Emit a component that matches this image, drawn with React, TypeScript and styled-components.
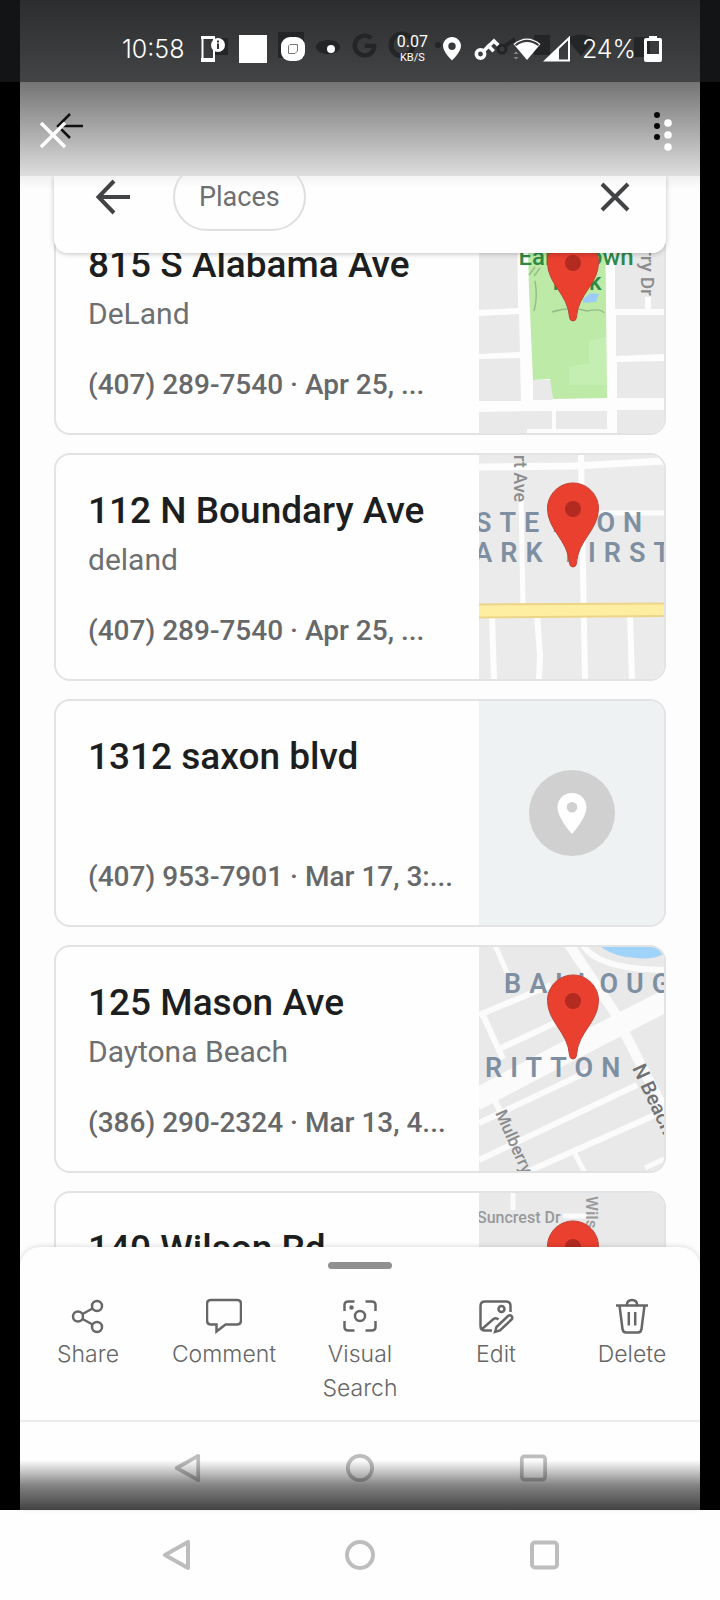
import React from "react";
import styled, { createGlobalStyle } from "styled-components";
import { FaGoogle } from "react-icons/fa";

interface Place {
  name: string;
  city?: string;
  detail: string;
  map: React.ReactNode;
}

const Pin = () => (
  <>
    <path
      d="M94 28C108 28 119.500 39.500 119.500 53.500C119.500 75 99 85 97.500 108Q97.200 112 94 112Q90.800 112 90.500 108C89 85 68.500 75 68.500 53.500C68.500 39.500 80 28 94 28Z"
      fill="#ea4030"
      stroke="#bd4338"
      strokeWidth="1"
    />
    <circle cx="94" cy="54" r="8" fill="#b22a20" />
  </>
);

const EarlBrownMap = () => (
  <MapDrawing viewBox="0 0 185 224" preserveAspectRatio="xMidYMid slice">
    <rect width="185" height="224" fill="#fdfdfd" />
    <g fill="#e9e9ea">
      <path d="M0 0H38L39 99L0 101ZM0 107L40 105L41 143L0 145ZM0 150L41 149L42 192H0ZM0 203L73 202V220H48V224H0Z" />
      <path d="M136 0H185V100H172V88H166V100H136ZM137 106H185V145L137 147ZM138 153L185 152V189H138ZM138 201H185V224H138Z" />
      <path d="M54 171H72L74 191H54ZM77 202H128V220H77Z" />
    </g>
    <path d="M48 0H126L128 189L74 190L71 170L54 171L50 80Z" fill="#bdeaa7" />
    <path d="M110 132L127 128V176H90V158L110 154Z" fill="#c5eeb3" />
    <path d="M104 90L112 84L120 85L117 93L104 94Z" fill="#9dcbf7" />
    <path d="M50 66L56 58M55 67L61 59M56 72Q59 88 55 102M73 103Q92 97 108 102Q122 99 125 104" fill="none" stroke="#96bd88" strokeWidth="1.500" />
    <MapText x="97" y="56" fontSize="24" textAnchor="middle" fill="#2d8a46">Earl Brown</MapText>
    <MapText x="98" y="81" fontSize="24" textAnchor="middle" fill="#2d8a46">Park</MapText>
    <MapText x="0" y="0" fontSize="19" transform="translate(162 40) rotate(90)" fill="#8b8c8e">rry Dr</MapText>
    <Pin />
  </MapDrawing>
);

const StetsonMap = () => (
  <MapDrawing viewBox="0 0 185 224" preserveAspectRatio="xMidYMid slice">
    <rect width="185" height="224" fill="#ebebeb" />
    <g stroke="#fdfdfd" fill="none">
      <path d="M0 12L95 11L185 6" strokeWidth="7" />
      <path d="M102 0L106 224" strokeWidth="6" />
      <path d="M42 40L44 152" strokeWidth="5" />
      <path d="M104 58H185" strokeWidth="5" />
      <path d="M13 160L15 224M58 160L61 200L60 224M151 160L153 224" strokeWidth="6" />
    </g>
    <path d="M0 149L185 148V161L0 163Z" fill="#fdeea2" />
    <path d="M0 149.500L185 148.500M0 162.500L185 161" stroke="#ecd589" strokeWidth="2" />
    <AreaText x="-4" y="77">STETSON</AreaText>
    <AreaText x="-28" y="107">PARK FIRST</AreaText>
    <MapText x="0" y="0" fontSize="18" transform="translate(35 0) rotate(90)" fill="#8b8c8e">rt Ave</MapText>
    <Pin />
  </MapDrawing>
);

const NoMap = () => (
  <MapDrawing viewBox="0 0 185 224" preserveAspectRatio="xMidYMid slice">
    <rect width="185" height="224" fill="#eef2f2" />
    <circle cx="93" cy="112" r="43" fill="#d0d0d0" />
    <path
      fillRule="evenodd"
      d="M93 92C101 92 107.500 98 107.500 106.500C107.500 117 93 133 93 133C93 133 78.500 117 78.500 106.500C78.500 98 85 92 93 92ZM93 101A5.300 5.300 0 1 0 93 111.600A5.300 5.300 0 1 0 93 101Z"
      fill="#ffffff"
    />
  </MapDrawing>
);

const BallougMap = () => (
  <MapDrawing viewBox="0 0 185 224" preserveAspectRatio="xMidYMid slice">
    <rect width="185" height="224" fill="#e9e9ea" />
    <path d="M122 0Q138 11 158 11Q172 13 185 7V0Z" fill="#9fd3fa" />
    <g stroke="#fbfbfb" fill="none">
      <path d="M104 -2Q118 22 185 23" strokeWidth="6" />
      <path d="M16 -2L29 28M96 207L106 226M166 221L185 212" strokeWidth="5" />
      <path d="M0 68L72 38M4 68L24 112M18 103L80 74" strokeWidth="6" />
      <path d="M89 -4L134 63L161 116L192 176" strokeWidth="10" />
      <path d="M-4 153L74 112L190 52" strokeWidth="22" />
      <path d="M0 176L110 124M0 213L158 138M50 224L176 168" strokeWidth="6" />
      <path d="M10 142L22 166" strokeWidth="6" />
    </g>
    <AreaText x="25" y="46">BALLOUG</AreaText>
    <AreaText x="6" y="130">RITTON</AreaText>
    <MapText x="0" y="0" fontSize="20" transform="translate(153 121) rotate(65)" fill="#717274">N Beach</MapText>
    <MapText x="0" y="0" fontSize="17" transform="translate(16 166) rotate(66)" fill="#8b8c8e">Mulberry</MapText>
    <Pin />
  </MapDrawing>
);

const SuncrestMap = () => (
  <MapDrawing viewBox="0 0 185 224" preserveAspectRatio="xMidYMid slice">
    <rect width="185" height="224" fill="#e9e9ea" />
    <path d="M34 0V17M84 23H108" stroke="#fbfbfb" strokeWidth="5" />
    <MapText x="-2" y="30" fontSize="16" fill="#98999b">Suncrest Dr</MapText>
    <MapText x="0" y="0" fontSize="17" transform="translate(107 3) rotate(90)" fill="#98999b">Wils</MapText>
    <Pin />
  </MapDrawing>
);

const places: Place[] = [
  { name: "815 S Alabama Ave", city: "DeLand", detail: "(407) 289-7540 · Apr 25, ...", map: <EarlBrownMap /> },
  { name: "112 N Boundary Ave", city: "deland", detail: "(407) 289-7540 · Apr 25, ...", map: <StetsonMap /> },
  { name: "1312 saxon blvd", detail: "(407) 953-7901 · Mar 17, 3:...", map: <NoMap /> },
  { name: "125 Mason Ave", city: "Daytona Beach", detail: "(386) 290-2324 · Mar 13, 4...", map: <BallougMap /> },
  { name: "140 Wilson Rd", detail: "", map: <SuncrestMap /> },
];

const actions = [
  {
    label: "Share",
    icon: (
      <>
        <circle cx="27" cy="8" r="5" />
        <circle cx="8" cy="18.500" r="5" />
        <circle cx="27" cy="29" r="5" />
        <path d="M12.500 16L22.500 10.500M12.500 21L22.500 26.500" />
      </>
    ),
  },
  {
    label: "Comment",
    icon: <path d="M5 2H31Q35 2 35 6V22Q35 26.500 31 26.500H19.500L10.500 33.500V26.500H5Q1 26.500 1 22V6Q1 2 5 2Z" />,
  },
  {
    label: "Visual Search",
    icon: (
      <>
        <path d="M2.500 13V7Q2.500 3.500 6.500 3.500H12.500M23.500 3.500H29.500Q33.500 3.500 33.500 7V13M33.500 23V29Q33.500 32.500 29.500 32.500H23.500M12.500 32.500H6.500Q2.500 32.500 2.500 29V23" />
        <circle cx="18" cy="18" r="5" />
        <circle cx="9.500" cy="9.500" r="1" fill="#676767" />
      </>
    ),
  },
  {
    label: "Edit",
    icon: (
      <>
        <path d="M14 32.500H7Q2.500 32.500 2.500 28V8Q2.500 3.500 7 3.500H28Q32.500 3.500 32.500 8V14" />
        <circle cx="23.500" cy="11" r="3" />
        <path d="M4 31L15.500 21Q18 19.200 20.500 21.500" />
        <path d="M17 34L18.500 29L30 18Q32 16.500 33.500 18Q35 20 33.500 21.500L22 32.500Z" />
      </>
    ),
  },
  {
    label: "Delete",
    icon: (
      <>
        <path d="M2 7.500H34M5.500 7.500L8.500 31Q9 34.500 12 34.500H24Q27 34.500 27.500 31L30.500 7.500M13 7Q13 2 18 2Q23 2 23 7M14.800 14V27.500M21.200 14V27.500" />
      </>
    ),
  },
];

const NavIcons = () => (
  <>
    <NavButton aria-label="Back">
      <svg viewBox="0 0 30 30"><path d="M4 15L27 2V28Z" /></svg>
    </NavButton>
    <NavButton aria-label="Home">
      <svg viewBox="0 0 30 30"><circle cx="15" cy="15" r="13" /></svg>
    </NavButton>
    <NavButton aria-label="Recent apps">
      <svg viewBox="0 0 30 30"><rect x="3" y="2.500" width="25" height="25" rx="3" /></svg>
    </NavButton>
  </>
);

const App: React.FC = () => {
  return (
    <Screen>
      <GlobalStyle />
      <StatusBar>
        <OldStatus viewBox="0 0 680 82" preserveAspectRatio="xMidYMid meet">
          <path d="M194 38H208V55H194ZM258 32H284V58H258ZM514 35H530V55H514Z" />
          <ellipse cx="308" cy="47" rx="12" ry="7" />
          <circle cx="382" cy="45" r="11" fill="none" stroke="#242527" strokeWidth="5" />
          <circle cx="418" cy="45" r="3" />
          <circle cx="482" cy="49" r="4" fill="none" stroke="#242527" strokeWidth="3" />
          <path d="M485 46L495 39" stroke="#242527" strokeWidth="4" />
          <path d="M547 39Q561 30 575 39L561 56ZM614 37H630V57H614Z" />
          <FaGoogle x="332" y="33" size={25} />
        </OldStatus>
        <StatusGroup $gap={14}>
          <Clock>10:58</Clock>
          <svg width="25" height="28" viewBox="0 0 25 28" fill="none">
            <path d="M2.500 2H14V26H2.500Z" stroke="#fff" strokeWidth="2" />
            <path d="M1 1H15V4H1ZM1 23H15V27H1Z" fill="#fff" />
            <circle cx="18" cy="10" r="7" fill="#fff" />
            <path d="M18 8.500V14M18 5.500V7.500" stroke="#333" strokeWidth="2" />
          </svg>
          <WhiteSquare />
          <svg width="24" height="24" viewBox="0 0 24 24">
            <rect width="24" height="24" rx="9" fill="#fff" />
            <path d="M9 7.500H16.500V14L14 16.500H7.500V9Z" fill="none" stroke="#777" />
          </svg>
          <Dot />
        </StatusGroup>
        <StatusGroup $gap={12}>
          <Speed>
            <b>0.07</b>
            <span>KB/S</span>
          </Speed>
          <svg width="20" height="25" viewBox="0 0 20 25">
            <path fillRule="evenodd" d="M10 1C15 1 19 5 19 10C19 16 10 24.500 10 24.500C10 24.500 1 16 1 10C1 5 5 1 10 1ZM10 6.500A3.700 3.700 0 1 0 10 13.900A3.700 3.700 0 1 0 10 6.500Z" fill="#fff" />
          </svg>
          <svg width="26" height="26" viewBox="0 0 26 26" fill="none" stroke="#fff" strokeWidth="3.500">
            <circle cx="6.500" cy="18" r="4.200" />
            <path d="M9.500 15L20 5L23 8M14.500 10L18.500 14" strokeLinecap="square" />
          </svg>
          <svg width="58" height="26" viewBox="0 0 58 26">
            <path d="M1.500 8Q15 -3 28.500 8L15 24Z" fill="#fff" />
            <path d="M3.500 9.200Q15 0.500 26.500 9.200" fill="none" stroke="#39393b" strokeWidth="2" />
            <path d="M57 2V24.500H33.500Z" fill="none" stroke="#fff" strokeWidth="2" />
            <path d="M47 11.500V25H33Z" fill="#fff" />
            <path d="M1.500 18L4 15.500L6.500 18ZM1.500 21L4 23.500L6.500 21Z" fill="#888" />
          </svg>
          <Battery>
            <Clock>24%</Clock>
            <svg width="18" height="26" viewBox="0 0 18 26">
              <path fillRule="evenodd" d="M5 0H13V2H16Q18 2 18 4V24Q18 26 16 26H2Q0 26 0 24V4Q0 2 2 2H5ZM3 5V18H15V5Z" fill="#fff" />
            </svg>
          </Battery>
        </StatusGroup>
      </StatusBar>

      <Viewer>
        <AppBar>
          <AppBarRow $dim>
            <IconButton aria-label="Back">
              <svg width="28" height="26" viewBox="0 0 28 26" fill="none" stroke="#111" strokeWidth="2.500">
                <path d="M27 13H2M14 1L2 13L14 25" />
              </svg>
            </IconButton>
            <IconButton aria-label="More">
              <svg width="8" height="28" viewBox="0 0 8 28" fill="#080808">
                <circle cx="4" cy="3" r="3" />
                <circle cx="4" cy="14" r="3" />
                <circle cx="4" cy="25" r="3" />
              </svg>
            </IconButton>
          </AppBarRow>
          <AppBarRow>
            <IconButton aria-label="Close">
              <svg width="26" height="26" viewBox="0 0 26 26" stroke="#fff" strokeWidth="3.500">
                <path d="M1 1L25 25M25 1L1 25" />
              </svg>
            </IconButton>
            <IconButton aria-label="More options">
              <svg width="8" height="32" viewBox="0 0 8 32" fill="#fff">
                <circle cx="4" cy="4" r="3.800" />
                <circle cx="4" cy="16" r="3.800" />
                <circle cx="4" cy="28" r="3.800" />
              </svg>
            </IconButton>
          </AppBarRow>
        </AppBar>

        <Results>
          <SearchBar>
            <IconButton aria-label="Back to search">
              <svg width="36" height="36" viewBox="0 0 36 36" fill="none" stroke="#414345" strokeWidth="4">
                <path d="M35 18H4M19 2L3.500 18L19 34" />
              </svg>
            </IconButton>
            <Chip>Places</Chip>
            <IconButton aria-label="Clear">
              <svg width="30" height="30" viewBox="0 0 30 30" stroke="#414345" strokeWidth="4">
                <path d="M2 2L28 28M28 2L2 28" />
              </svg>
            </IconButton>
          </SearchBar>
          <PlaceList>
            {places.map((place) => (
              <Card key={place.name}>
                <div className="info">
                  <h2>{place.name}</h2>
                  {place.city && <div className="city">{place.city}</div>}
                  {place.detail && <div className="detail">{place.detail}</div>}
                </div>
                <div className="map">{place.map}</div>
              </Card>
            ))}
          </PlaceList>
        </Results>

        <Sheet>
          <Handle />
          <Actions>
            {actions.map((action) => (
              <ActionButton key={action.label}>
                <svg width="36" height="36" viewBox="0 0 36 36">{action.icon}</svg>
                <span>{action.label}</span>
              </ActionButton>
            ))}
          </Actions>
          <InnerNav>
            <NavIcons />
          </InnerNav>
        </Sheet>
      </Viewer>

      <SystemNav>
        <NavIcons />
      </SystemNav>
    </Screen>
  );
};

const GlobalStyle = createGlobalStyle`
  * {
    box-sizing: border-box;
  }
  body {
    margin: 0;
    background: #000;
    font-family: Roboto, "Liberation Sans", sans-serif;
  }
  button {
    border: none;
    background: none;
    padding: 0;
    font-family: inherit;
    cursor: pointer;
  }
  svg {
    display: block;
    flex-shrink: 0;
  }
`;

const Screen = styled.div`
  display: flex;
  flex-direction: column;
  height: 100vh;
`;

const StatusBar = styled.header`
  position: relative;
  flex-shrink: 0;
  display: flex;
  justify-content: space-between;
  align-items: center;
  height: 82px;
  padding: 15px 38px 0 102px;
  border: solid #131416;
  border-width: 0 20px;
  background: linear-gradient(#2c2d2f, #434446);
  color: #fff;
`;

// icons of the status bar that shows through from below
const OldStatus = styled.svg`
  position: absolute;
  inset: 0;
  width: 100%;
  height: 100%;
  fill: #242527;
  color: #242527;
`;

const StatusGroup = styled.div<{ $gap: number }>`
  position: relative;
  display: flex;
  align-items: center;
  gap: ${(p) => p.$gap}px;
  & > :first-child {
    margin-right: 2px;
  }
`;

const Clock = styled.span`
  font-family: Inter, "Liberation Sans", sans-serif;
  font-size: 25px;
  font-weight: 300;
  line-height: 32px;
`;

const Battery = styled.div`
  display: flex;
  align-items: center;
  gap: 8px;
`;

const WhiteSquare = styled.i`
  width: 28px;
  height: 28px;
  background: #fff;
`;

const Dot = styled.i`
  width: 8px;
  height: 8px;
  margin: 0 8px;
  border-radius: 50%;
  background: #fff;
`;

const Speed = styled.div`
  display: flex;
  flex-direction: column;
  align-items: center;
  b {
    font-size: 16px;
    font-weight: 400;
    line-height: 18px;
  }
  span {
    font-size: 11px;
    font-weight: 400;
    line-height: 13px;
  }
`;

const Viewer = styled.main`
  flex: 1;
  min-height: 0;
  display: flex;
  flex-direction: column;
  padding: 0 20px;
  background: #000;
`;

const AppBar = styled.div`
  flex-shrink: 0;
  display: grid;
  height: 94px;
  background: linear-gradient(#747474, #a8a8a8 50%, #dedede);
`;

const AppBarRow = styled.div<{ $dim?: boolean }>`
  grid-area: 1 / 1;
  display: flex;
  justify-content: space-between;
  align-items: center;
  height: ${(p) => (p.$dim ? "88px" : "106px")};
  padding: ${(p) => (p.$dim ? "0 39px 0 36px" : "0 28px 0 20px")};
`;

const IconButton = styled.button`
  display: flex;
`;

const Results = styled.section`
  flex: 1;
  min-height: 0;
  overflow: hidden;
  padding: 0 34px;
  background: linear-gradient(#f0f0f0, #fdfdfd 14px);
`;

const SearchBar = styled.div`
  position: relative;
  z-index: 1;
  display: flex;
  align-items: flex-end;
  height: 77px;
  padding: 0 36px 22px 41px;
  border-radius: 0 0 14px 14px;
  background: linear-gradient(#f4f4f4, #fefefe 12px);
  box-shadow: 0 1px 5px rgba(0, 0, 0, 0.24);
  ${IconButton} {
    height: 68px;
    align-items: center;
  }
  ${IconButton}:last-child {
    margin-left: auto;
  }
`;

const Chip = styled.button`
  height: 68px;
  margin-left: 42px;
  padding: 0 24px;
  border: 2px solid #dfdfe0;
  border-radius: 34px;
  color: #6d6f71;
  font-size: 27px;
  line-height: 32px;
`;

const PlaceList = styled.div`
  display: flex;
  flex-direction: column;
  gap: 18px;
  margin-top: -46px;
`;

const Card = styled.article`
  flex-shrink: 0;
  display: flex;
  height: 228px;
  overflow: hidden;
  border: 2px solid #e2e3e4;
  border-radius: 16px;
  background: #fefefe;
  .info {
    flex: 1;
    min-width: 0;
    display: flex;
    flex-direction: column;
    padding: 34px 0 32px 32px;
    white-space: nowrap;
  }
  h2 {
    margin: 0;
    color: #1d1e20;
    font-size: 37px;
    font-weight: 500;
    line-height: 44px;
  }
  .city {
    margin-top: 9px;
    color: #6d6f71;
    font-size: 30px;
    line-height: 36px;
  }
  .detail {
    margin-top: auto;
    color: #66686a;
    font-size: 28px;
    font-weight: 500;
    line-height: 32px;
  }
  .map {
    width: 185px;
  }
`;

const MapDrawing = styled.svg`
  width: 100%;
  height: 100%;
`;

const MapText = styled.text`
  font-family: Roboto, sans-serif;
  font-weight: 500;
`;

const AreaText = styled.text`
  fill: #7e8fa2;
  font-family: Roboto, sans-serif;
  font-size: 27px;
  font-weight: 600;
  letter-spacing: 8px;
`;

const Sheet = styled.footer`
  position: relative;
  flex-shrink: 0;
  margin-top: -20px;
  padding-top: 15px;
  border-radius: 20px 20px 0 0;
  background: #fefefe;
  box-shadow: 0 -1px 5px rgba(0, 0, 0, 0.13);
`;

const Handle = styled.div`
  width: 64px;
  height: 7px;
  margin: 0 auto;
  border-radius: 4px;
  background: #909090;
`;

const Actions = styled.div`
  display: grid;
  grid-template-columns: repeat(5, 1fr);
  padding: 29px 0 15px;
`;

const ActionButton = styled.button`
  display: flex;
  flex-direction: column;
  align-items: center;
  gap: 3px;
  color: #666;
  font-family: Inter, "Liberation Sans", sans-serif;
  font-size: 23px;
  font-weight: 300;
  line-height: 34px;
  svg {
    fill: none;
    stroke: #676767;
    stroke-width: 2.500;
  }
`;

const NavButton = styled.button`
  display: flex;
  justify-content: center;
  align-items: center;
  svg {
    width: 30px;
    height: 30px;
    fill: none;
    stroke: #bdbdbd;
    stroke-width: 4;
    stroke-linejoin: round;
  }
`;

const InnerNav = styled.nav`
  position: relative;
  display: grid;
  grid-template-columns: repeat(3, 1fr);
  height: 90px;
  padding: 4px 80px 0;
  border-top: 2px solid #ececec;
  svg {
    width: 28px;
    height: 28px;
  }
  &::after {
    content: "";
    position: absolute;
    inset: 38px 0 0;
    background: linear-gradient(rgba(0, 0, 0, 0), rgba(0, 0, 0, 0.48) 50%, rgba(0, 0, 0, 0.74));
    pointer-events: none;
  }
`;

const SystemNav = styled.nav`
  flex-shrink: 0;
  display: grid;
  grid-template-columns: repeat(3, 1fr);
  height: 90px;
  padding: 0 84px;
  background: #fefefe;
`;

export default App;
